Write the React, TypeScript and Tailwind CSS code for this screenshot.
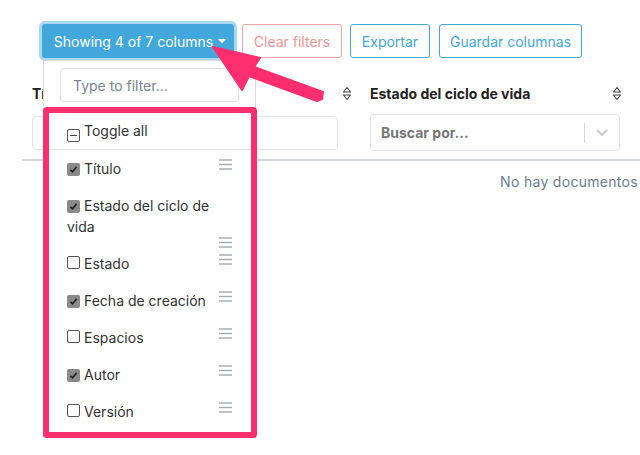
import React from 'react'

type Col = { label: string; checked: boolean; handleTop?: string }

const columns: Col[] = [
  { label: 'Título', checked: true },
  { label: 'Estado del ciclo de vida', checked: true, handleTop: 'mt-[42px] -mb-[12px]' },
  { label: 'Estado', checked: false },
  { label: 'Fecha de creación', checked: true },
  { label: 'Espacios', checked: false },
  { label: 'Autor', checked: true },
  { label: 'Versión', checked: false },
]

function Box({ checked }: { checked: boolean }) {
  if (checked) {
    return (
      <span className="inline-flex w-[13px] h-[13px] rounded-[2px] bg-[#8a8a8a] items-center justify-center align-[0px] mr-[4px]">
        <svg width="9" height="9" viewBox="0 0 9 9">
          <path d="M1.5 4.8 L3.6 6.8 L7.6 1.8" stroke="#1f1f1f" strokeWidth="1.6" fill="none" />
        </svg>
      </span>
    )
  }
  return (
    <span className="inline-block w-[13px] h-[13px] rounded-[2px] border border-[#555] bg-white align-[0px] mr-[4px]" />
  )
}

function Handle() {
  return (
    <svg width="13" height="11" viewBox="0 0 13 11" className="shrink-0">
      <line x1="0" y1="1" x2="13" y2="1" stroke="#a3aab5" strokeWidth="1.4" />
      <line x1="0" y1="5.5" x2="13" y2="5.5" stroke="#a3aab5" strokeWidth="1.4" />
      <line x1="0" y1="10" x2="13" y2="10" stroke="#a3aab5" strokeWidth="1.4" />
    </svg>
  )
}

function SortIcon() {
  return (
    <svg width="10" height="15" viewBox="0 0 10 15">
      <polygon points="1.5,6 5,1.5 8.5,6" stroke="#444" strokeWidth="1.1" fill="none" strokeLinejoin="round" />
      <polygon points="1.5,9 5,13.5 8.5,9" stroke="#444" strokeWidth="1.1" fill="none" strokeLinejoin="round" />
    </svg>
  )
}

export default function App() {
  return (
    <div
      className="relative w-[640px] h-[455px] overflow-hidden bg-white text-[14px] text-[#333]"
      style={{ fontFamily: 'Inter, "Liberation Sans", sans-serif' }}
    >
      {/* Toolbar */}
      <div className="flex pl-[42px] pt-[24px] gap-[8px]">
        <button className="h-[34px] w-[192px] rounded-[3px] bg-[#42a8db] text-white ring-[3px] ring-[#a9d8f0] flex items-center justify-center gap-[5px] pl-[4px]">
          Showing 4 of 7 columns
          <svg width="8" height="5" viewBox="0 0 8 5">
            <polygon points="0,0 8,0 4,4.5" fill="white" />
          </svg>
        </button>
        <button className="h-[34px] w-[100px] rounded-[3px] border border-[#f4a5a5] text-[#f29595]">
          Clear filters
        </button>
        <button className="h-[34px] w-[80px] rounded-[3px] border border-[#42a8db] text-[#42a8db]">
          Exportar
        </button>
        <button className="ml-[1px] h-[34px] w-[143px] rounded-[3px] border border-[#42a8db] text-[#42a8db]">
          Guardar columnas
        </button>
      </div>

      {/* Table */}
      <div className="ml-[22px] mt-[23px]">
        <div className="flex">
          <div className="w-[338px] pl-[10px]">
            <div className="flex items-center justify-between pr-[8px] h-[24px]">
              <span className="font-bold text-[#222]">Título</span>
              <SortIcon />
            </div>
            <div className="mt-[11px] h-[34px] w-[306px] rounded-[4px] border border-[#e1e4e8]" />
          </div>
          <div className="w-[270px] pl-[10px]">
            <div className="flex items-center justify-between pr-[8px] h-[24px]">
              <span className="font-bold text-[#222]">Estado del ciclo de vida</span>
              <SortIcon />
            </div>
            <div className="mt-[9px] h-[37px] w-[250px] rounded-[4px] border border-[#e1e4e8] flex items-center pl-[10px]">
              <span className="flex-1 font-bold text-[#777]">Buscar por...</span>
              <span className="w-px h-[20px] bg-[#d6d6d6]" />
              <svg width="34" height="12" viewBox="0 0 34 12">
                <path d="M12 3 L17 8 L22 3" stroke="#ccc" strokeWidth="2" fill="none" />
              </svg>
            </div>
          </div>
        </div>
        <div className="mt-[8px] h-[2px] bg-[#d3d8dd]" />
        <div className="flex justify-end pr-[2px] mt-[10px] whitespace-nowrap text-[#6d7b8a] tracking-[0.3px]">
          No hay documentos
        </div>
      </div>

      {/* Column chooser dropdown */}
      <div className="absolute left-[43px] top-[60px] w-[213px] bg-white border border-[#d9d9d9] border-b-0">
        <div className="px-[16px] pt-[7px] pb-[5px]">
          <div className="h-[34px] rounded-[4px] border border-[#dcdfe3] flex items-center pl-[12px] text-[#7b8490]">
            Type to filter...
          </div>
        </div>
        <div className="-mx-px border-[6px] border-[#ff2e6e] rounded-[4px] bg-white w-[214px] pb-[2px]">
          <div className="px-[18px] pt-[7px] pb-[7px] leading-[21px] text-[#333] border-b border-[#e3e3e3]">
            <span className="inline-flex w-[13px] h-[13px] rounded-[2px] border border-[#555] items-center justify-center align-[0px] mr-[4px]">
              <span className="w-[7px] h-[1.5px] bg-[#444]" />
            </span>
            Toggle all
          </div>
          {columns.map((c) => (
            <div key={c.label} className="flex items-start pl-[18px] pr-[19px] py-[8px] leading-[21px] text-[#333]">
              <div className="flex-1 pr-[4px]">
                <Box checked={c.checked} />
                {c.label}
              </div>
              <div className={c.handleTop ?? 'mt-[1px]'}>
                <Handle />
              </div>
            </div>
          ))}
        </div>
      </div>

      {/* Annotation arrow */}
      <svg className="absolute left-0 top-0 pointer-events-none" width="640" height="455" viewBox="0 0 640 455">
        <polygon
          points="213,47 260,58 254,67 323,92 322,99 317,101 249,76 242,90"
          fill="#ff2e6e"
          stroke="#ff2e6e"
          strokeWidth="2"
          strokeLinejoin="round"
        />
      </svg>
    </div>
  )
}
